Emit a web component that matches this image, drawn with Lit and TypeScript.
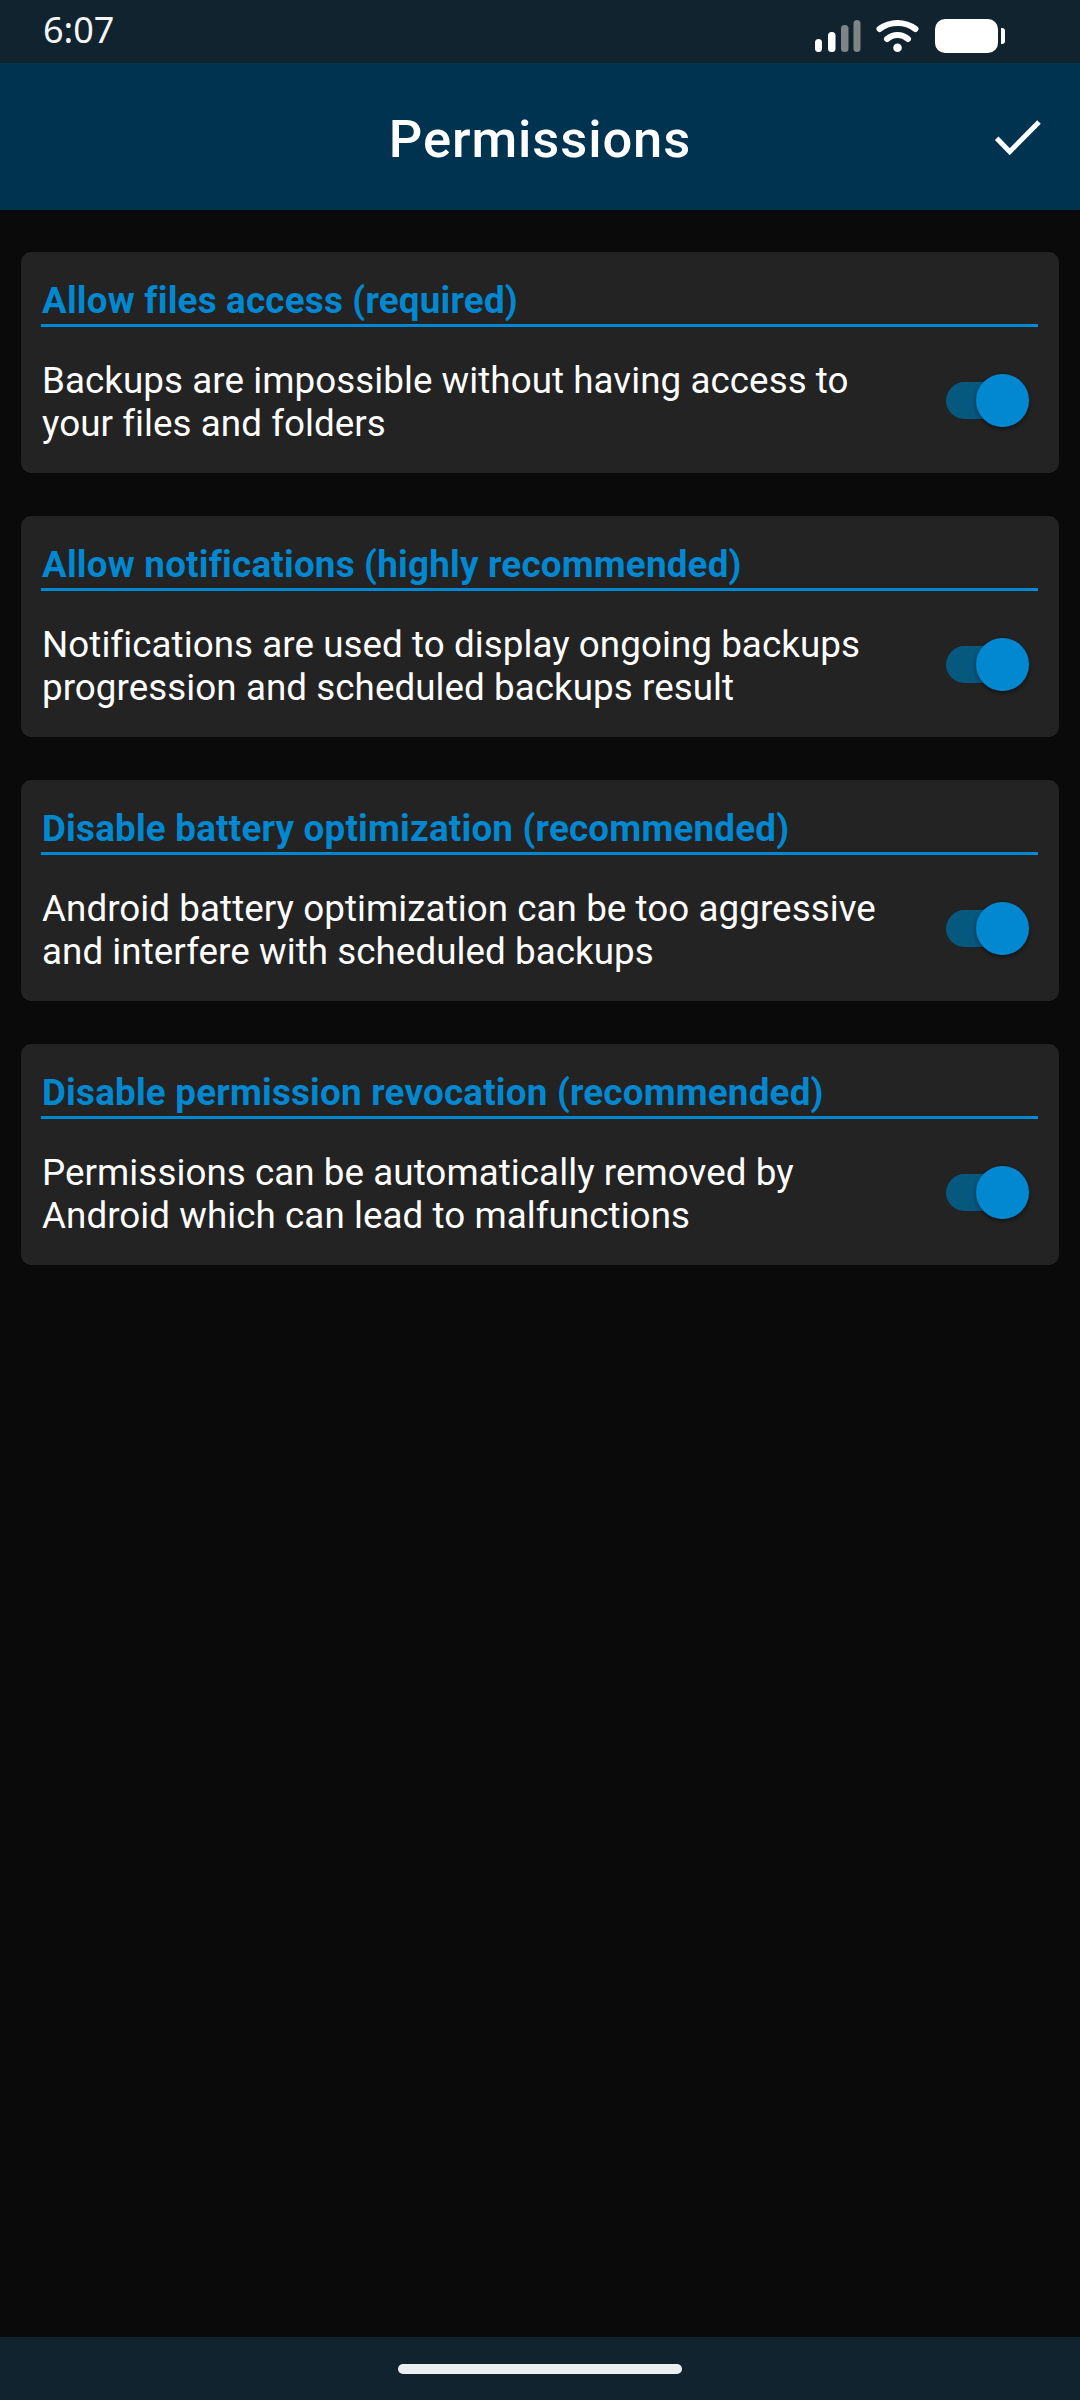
import { LitElement, html, css } from "lit";
import { customElement } from "lit/decorators.js";

const items = [
  ["Allow files access (required)", "Backups are impossible without having access to", "your files and folders"],
  ["Allow notifications (highly recommended)", "Notifications are used to display ongoing backups", "progression and scheduled backups result"],
  ["Disable battery optimization (recommended)", "Android battery optimization can be too aggressive", "and interfere with scheduled backups"],
  ["Disable permission revocation (recommended)", "Permissions can be automatically removed by", "Android which can lead to malfunctions"],
];

@customElement("app-root")
export class AppRoot extends LitElement {
  static styles = css`
    :host { display: flex; flex-direction: column; width: 1080px; height: 2400px; background: #0a0a0a; font-family: Roboto, sans-serif; color: #fff; overflow: hidden; }
    .status { height: 63px; background: #11232e; display: flex; align-items: center; justify-content: space-between; padding: 0 75px 4px 43px; box-sizing: border-box; font-size: 36px; font-family: "Noto Sans", sans-serif; color: #f4f5f5; flex: none; }
    .status svg { display: block; }
    .bar { height: 147px; padding-top: 4px; box-sizing: border-box; background: #003350; display: flex; align-items: center; justify-content: center; position: relative; font-size: 52.5px; font-weight: 500; flex: none; letter-spacing: 0.9px; }
    .check { position: absolute; left: 992px; top: 56px; }
    .list { flex: 1; padding: 42px 21px 0; display: flex; flex-direction: column; gap: 43px; }
    .card { height: 221px; box-sizing: border-box; background: #232323; border-radius: 10px; padding: 25px 21px 0 20px; }
    .title { color: #0288d1; font-size: 36.75px; font-weight: 700; letter-spacing: 0.22px; line-height: 47px; height: 47px; border-bottom: 3px solid #0288d1; white-space: nowrap; padding-left: 1px; }
    .row { display: flex; justify-content: space-between; align-items: center; margin-top: 32px; padding-left: 1px; }
    .desc { font-size: 36.75px; letter-spacing: 0.06px; line-height: 43px; white-space: nowrap; color: #fdfdfd; }
    .switch { position: relative; width: 83px; height: 37px; background: #07587f; border-radius: 19px; margin: 0 9px 3px 0; flex: none; }
    .thumb { position: absolute; right: 0; top: -8px; width: 53px; height: 53px; background: #0288d1; border-radius: 50%; box-shadow: 0 2px 4px rgba(0,0,0,.45); }
    .nav { height: 63px; background: #11232e; display: flex; justify-content: center; padding-top: 27px; box-sizing: border-box; flex: none; }
    .pill { width: 284px; height: 10px; border-radius: 5px; background: #ecefef; }
  `;

  render() {
    return html`
      <div class="status">
        <span>6:07</span>
        <svg width="200" height="50" viewBox="0 0 200 50">
          <rect x="10" y="34" width="7" height="13" rx="3.5" fill="#fff"/>
          <rect x="23" y="27" width="7.5" height="20" rx="3.5" fill="#fff"/>
          <rect x="36" y="20" width="7.5" height="27" rx="3.5" fill="#7f8487"/>
          <rect x="48.500" y="15" width="7" height="32" rx="3.500" fill="#7f8487"/>
          <path d="M74.500 24 C85 16 100 16 110.500 24" stroke="#fff" stroke-width="6" fill="none" stroke-linecap="round"/>
          <path d="M82 34 C88 28.500 97 28.500 103 34" stroke="#fff" stroke-width="6" fill="none" stroke-linecap="round"/>
          <circle cx="92.500" cy="42.700" r="4.300" fill="#fff"/>
          <rect x="130" y="14" width="63" height="34" rx="10" fill="#fff"/>
          <path d="M196 23 h1 a3 3 0 0 1 3 3 v10 a3 3 0 0 1 -3 3 h-1 z" fill="#fff"/>
        </svg>
      </div>
      <div class="bar">
        Permissions
        <svg class="check" width="52" height="44" viewBox="0 0 52 44"><path d="M4.700 19.300 L17.700 32.700 L47 3" stroke="#fff" stroke-width="5" fill="none"/></svg>
      </div>
      <div class="list">
        ${items.map(([t, a, b]) => html`
          <div class="card">
            <div class="title">${t}</div>
            <div class="row">
              <div class="desc">${a}<br />${b}</div>
              <div class="switch"><div class="thumb"></div></div>
            </div>
          </div>`)}
      </div>
      <div class="nav"><div class="pill"></div></div>
    `;
  }
}
